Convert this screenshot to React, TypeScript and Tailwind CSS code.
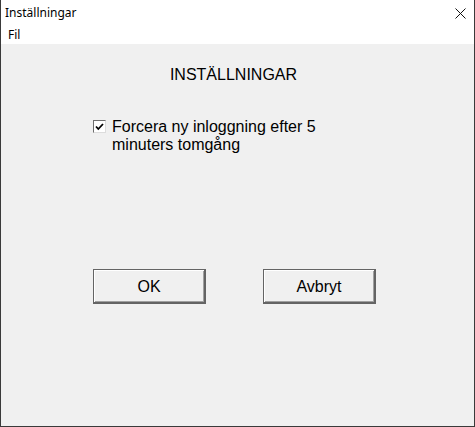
export default function App() {
  return (
    <div className="w-[475px] h-[427px] flex flex-col bg-[#f0f0f0] border-x border-b border-[#3a3a3a] overflow-hidden">
      {/* title bar */}
      <div className="h-[25px] bg-white flex items-center justify-between pl-[4px] pr-[7px]">
        <span className="text-[12px] leading-none text-black font-['Noto_Sans',sans-serif]">Inställningar</span>
        <svg width="11" height="11" viewBox="0 0 11 11" className="mt-[2px] mr-[1px]">
          <path d="M0.5 0.5 L10.5 10.5 M10.5 0.5 L0.5 10.5" stroke="#111" strokeWidth="1" />
        </svg>
      </div>
      {/* menu bar */}
      <div className="h-[19px] bg-white flex items-center pl-[7px]">
        <span className="text-[12px] leading-none text-black font-['Noto_Sans',sans-serif]">Fil</span>
      </div>

      <div className="flex-1 flex flex-col font-['Liberation_Sans',Arial,sans-serif] text-black">
        <h1 className="pt-[22px] text-center text-[16px] leading-[18px] pr-[8px]">INSTÄLLNINGAR</h1>

        <label className="mt-[34px] ml-[92px] flex items-start gap-[6px]">
          <span className="mt-[2px] w-[13px] h-[13px] bg-white border border-t-[#6d6d6d] border-l-[#6d6d6d] border-r-[#dcdcdc] border-b-[#dcdcdc] flex items-center justify-center shrink-0">
            <svg width="9" height="8" viewBox="0 0 9 8">
              <path d="M1 3.5 L3.3 6 L8 1" fill="none" stroke="#000" strokeWidth="1.8" />
            </svg>
          </span>
          <span className="w-[230px] text-[16px] leading-[18px]">Forcera ny inloggning efter 5 minuters tomgång</span>
        </label>

        <div className="mt-[115px] ml-[92px] flex gap-[57px]">
          <button className="w-[113px] h-[35px] border border-[#646464] border-b-2 border-r-2 bg-[#f0f0f0] shadow-[inset_1px_1px_0_#ffffff,inset_-1px_-1px_0_#a0a0a0] text-[16px] leading-none pt-[1px]">
            OK
          </button>
          <button className="w-[113px] h-[35px] border border-[#646464] border-b-2 border-r-2 bg-[#f0f0f0] shadow-[inset_1px_1px_0_#ffffff,inset_-1px_-1px_0_#a0a0a0] text-[16px] leading-none pt-[1px]">
            Avbryt
          </button>
        </div>
      </div>
    </div>
  );
}
